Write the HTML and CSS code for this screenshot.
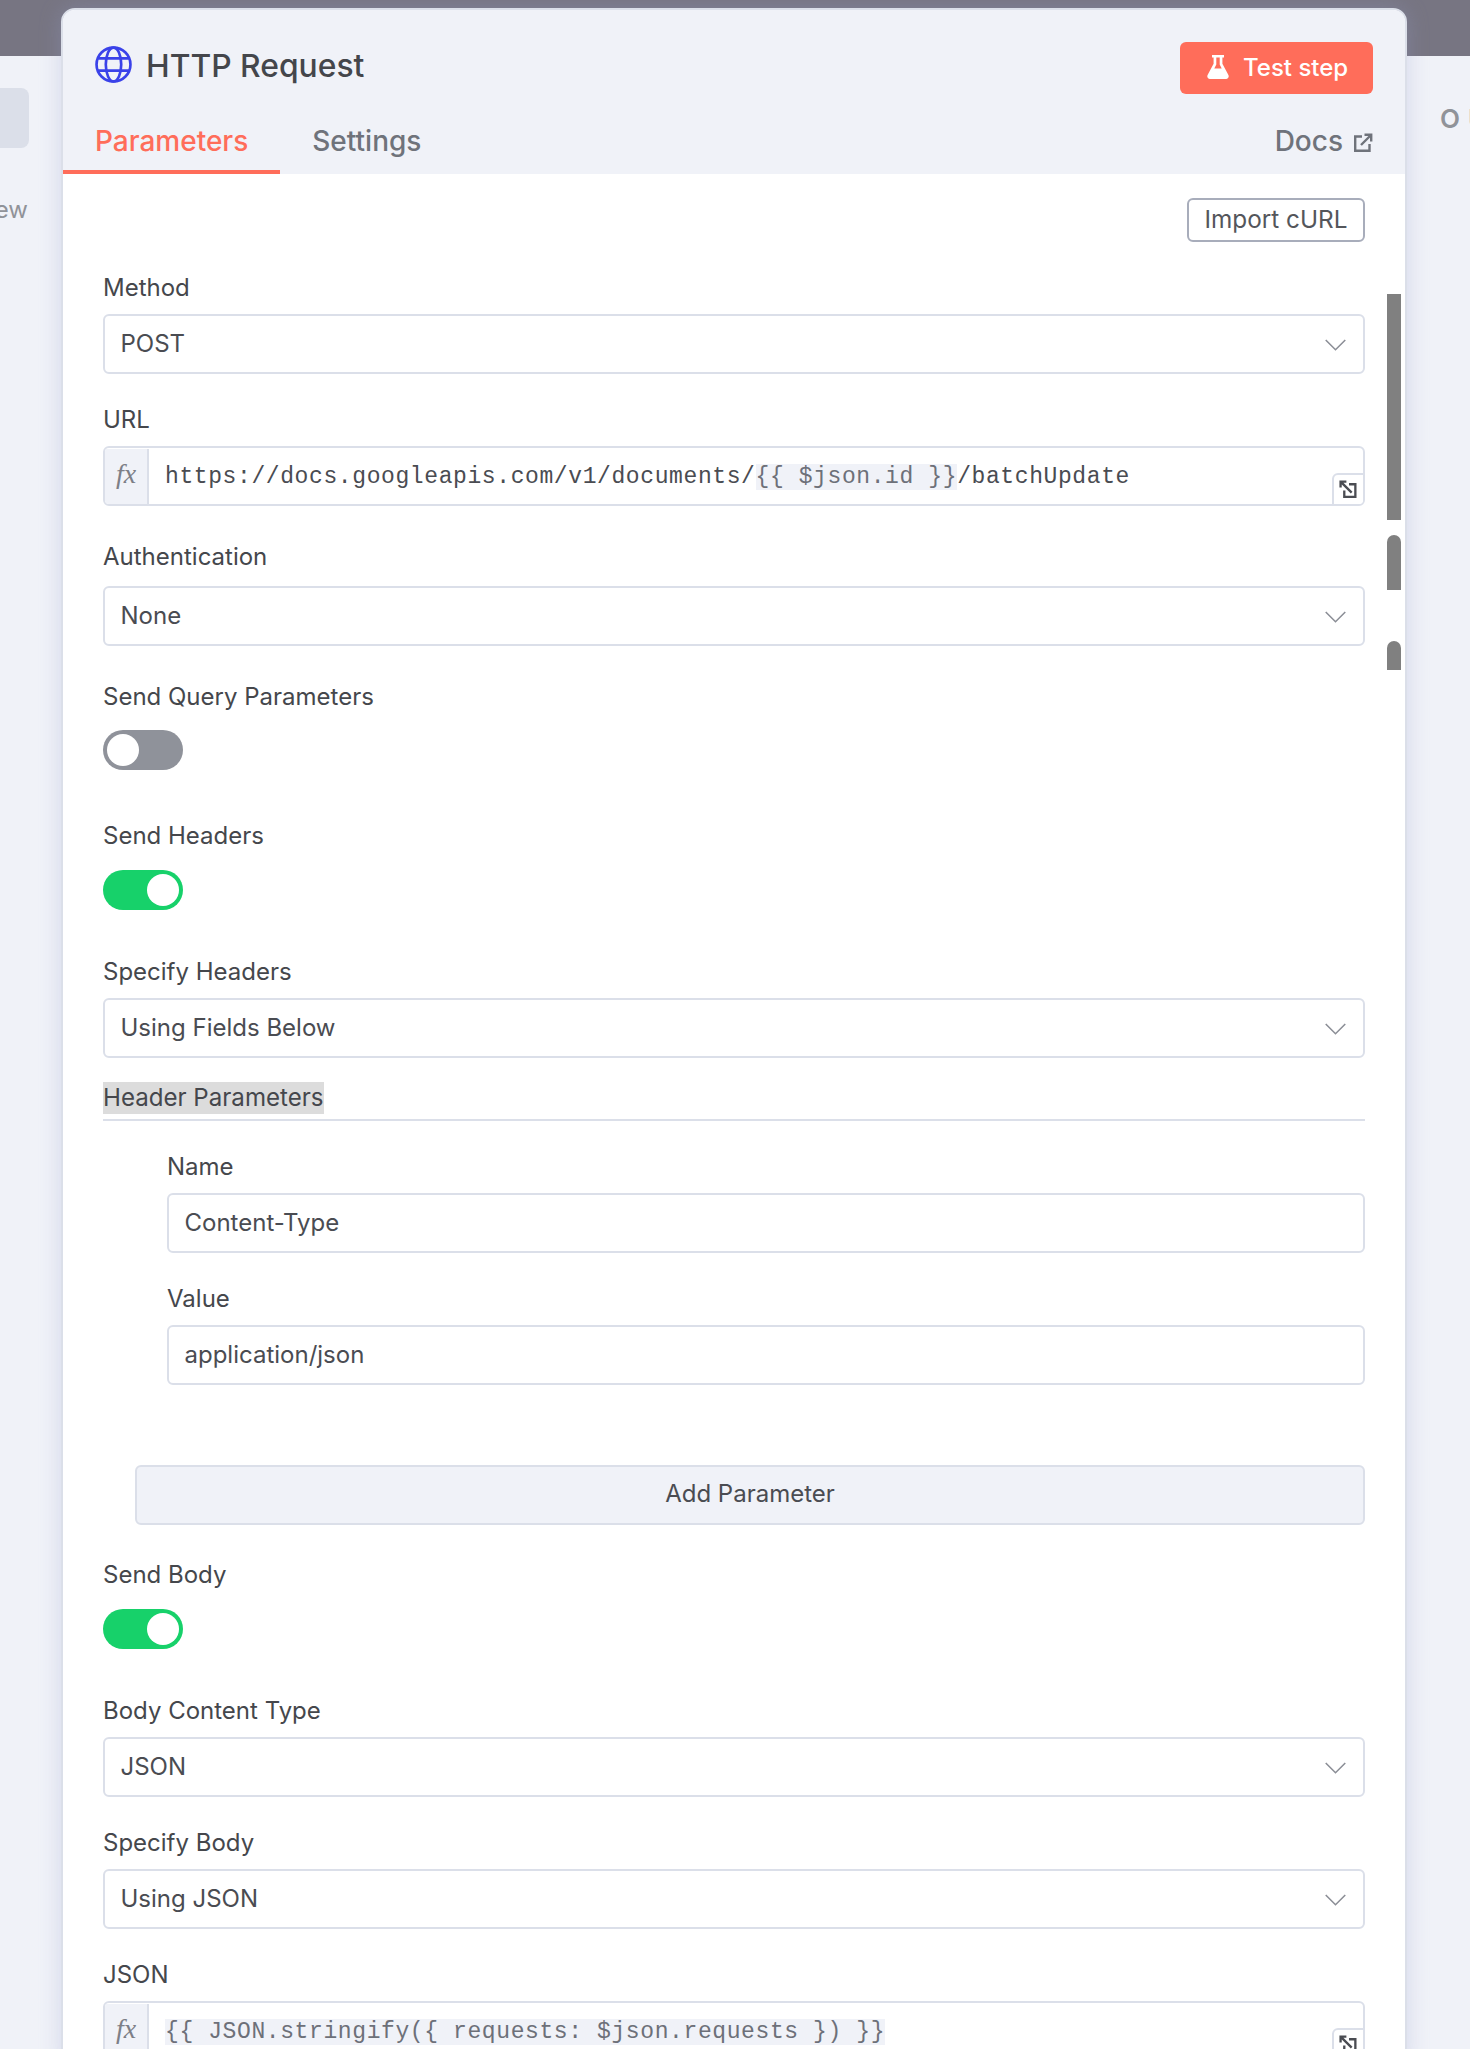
FILE: index.html
```html
<!DOCTYPE html>
<html lang="en">
<head>
<meta charset="utf-8">
<title>HTTP Request</title>
<link rel="stylesheet" href="styles.css">
</head>
<body>
<div class="page">
  <aside class="side side-left">
    <div class="side-pill"></div>
    <div class="side-text"><span>ew</span></div>
  </aside>
  <main class="card">
    <header class="card-head">
      <div class="title-row">
        <div class="title">
          <svg class="globe" viewBox="0 0 36 36" fill="none" stroke="#3a42e9" stroke-width="2.6"><circle cx="18" cy="18" r="16.5"/><ellipse cx="18" cy="18" rx="7.5" ry="16.5"/><path d="M3 12h30M3 24h30"/></svg>
          <span class="title-text">HTTP Request</span>
        </div>
        <button class="test-btn">
          <svg class="flask" viewBox="0 0 22 24" fill="#fff"><path d="M5 0h12v2.6h-1.6v6.2l6 11.2c.9 1.8-.2 4-2.3 4H2.900c-2.100 0-3.200-2.200-2.300-4l6-11.200V2.600H5zM9.300 2.600v6.900L7.300 13.400h7.400l-2-3.900V2.600z"/></svg>
          <span>Test step</span>
        </button>
      </div>
      <nav class="tabs">
        <a class="tab tab-active">Parameters</a>
        <a class="tab">Settings</a>
        <a class="docs">Docs
          <svg class="ext" viewBox="0 0 20 20" fill="none" stroke="#6f737b" stroke-width="2.400"><path d="M9 3.500H2.200v14.300h14.300V11M8 12L18 2M11.500 1.800h6.700v6.700"/></svg>
        </a>
      </nav>
    </header>
    <section class="card-body">
      <div class="scrollbar">
        <div class="thumb thumb-1"></div>
        <div class="thumb thumb-2"></div>
        <div class="thumb thumb-3"></div>
      </div>
      <div class="actions"><button class="import-btn">Import cURL</button></div>

      <div class="field f-method">
        <label>Method</label>
        <div class="control select"><span>POST</span><svg class="chev" viewBox="0 0 20 11" fill="none"><path d="M.7.7L10 10 19.300.7"/></svg></div>
      </div>
      <div class="field f-url">
        <label>URL</label>
        <div class="control expr">
          <i class="fx">fx</i>
          <code class="code">https://docs.googleapis.com/v1/documents/<mark>{{ $json.id }}</mark>/batchUpdate</code>
          <span class="expand"><svg viewBox="0 0 18 18" fill="none" stroke="#4a4c52" stroke-width="2.200"><path d="M2 2l10 10M1.500 7V1.500H7M9.500 4H15.500V16H5V10"/></svg></span>
        </div>
      </div>
      <div class="field f-auth">
        <label>Authentication</label>
        <div class="control select"><span>None</span><svg class="chev" viewBox="0 0 20 11" fill="none"><path d="M.7.7L10 10 19.300.7"/></svg></div>
      </div>
      <div class="field f-query">
        <label>Send Query Parameters</label>
        <div class="switch"></div>
      </div>
      <div class="field f-headers">
        <label>Send Headers</label>
        <div class="switch on"></div>
      </div>
      <div class="field f-spec">
        <label>Specify Headers</label>
        <div class="control select"><span>Using Fields Below</span><svg class="chev" viewBox="0 0 20 11" fill="none"><path d="M.7.7L10 10 19.300.7"/></svg></div>
      </div>

      <div class="collection-title"><span>Header Parameters</span></div>
      <div class="collection-items">
        <div class="field f-name">
          <label>Name</label>
          <div class="control input"><span>Content-Type</span></div>
        </div>
        <div class="field f-value">
          <label>Value</label>
          <div class="control input"><span>application/json</span></div>
        </div>
      </div>
      <button class="add-btn">Add Parameter</button>

      <div class="field f-body">
        <label>Send Body</label>
        <div class="switch on"></div>
      </div>
      <div class="field f-ctype">
        <label>Body Content Type</label>
        <div class="control select"><span>JSON</span><svg class="chev" viewBox="0 0 20 11" fill="none"><path d="M.7.7L10 10 19.300.7"/></svg></div>
      </div>
      <div class="field f-sbody">
        <label>Specify Body</label>
        <div class="control select"><span>Using JSON</span><svg class="chev" viewBox="0 0 20 11" fill="none"><path d="M.7.7L10 10 19.300.7"/></svg></div>
      </div>
      <div class="field f-json">
        <label>JSON</label>
        <div class="control expr">
          <i class="fx">fx</i>
          <code class="code"><mark>{{ JSON.stringify({ requests: $json.requests }) }}</mark></code>
          <span class="expand"><svg viewBox="0 0 18 18" fill="none" stroke="#4a4c52" stroke-width="2.200"><path d="M2 2l10 10M1.500 7V1.500H7M9.500 4H15.500V16H5V10"/></svg></span>
        </div>
      </div>
    </section>
  </main>
  <aside class="side side-right">
    <div class="side-letter">OU</div>
  </aside>
</div>
</body>
</html>
```
FILE: styles.css
```css
* { box-sizing: border-box; }
html, body { margin: 0; padding: 0; }
body {
  width: 1470px;
  height: 2049px;
  overflow: hidden;
  font-family: Inter, "Noto Sans", sans-serif;
  color: #3f4045;
  background: linear-gradient(#777582 56px, #f0f2f8 56px);
}
.page { display: flex; height: 2049px; align-items: flex-start; }

.side { flex: none; overflow: hidden; height: 1993px; margin-top: 56px; }
.side-left { width: 61px; }
.side-right { width: 63px; }
.side-pill {
  width: 29px; height: 60px; margin-top: 32px;
  background: #dbdfe9; border-radius: 0 8px 8px 0;
}
.side-text {
  width: 28px; margin-top: 50px; display: flex; justify-content: flex-end;
  font-size: 24px; line-height: 24px; color: #909399; white-space: nowrap;
}
.side-letter {
  margin: 48px 0 0 33px; font-size: 26px; line-height: 30px; letter-spacing: 8px;
  font-weight: 600; color: #909399; white-space: nowrap;
}

.card {
  flex: none;
  width: 1346px;
  height: 2060px;
  margin-top: 8px;
  background: #fff;
  border: 2px solid #dbdfe9;
  border-radius: 14px 14px 0 0;
  box-shadow: 0 0 22px rgba(150, 160, 205, .32);
  position: relative;
  z-index: 1;
}
.card-head {
  height: 164px;
  background: #f0f2f8;
  border-radius: 12px 12px 0 0;
  display: flex; flex-direction: column;
}
.title-row {
  display: flex; align-items: flex-start; justify-content: space-between;
  padding: 32px 32px 0 32px; height: 122px;
}
.title { display: flex; align-items: center; gap: 14px; height: 44px; font-size: 31.800px; font-weight: 500; color: #44464b; }
.title-text { padding-top: 2px; }
.globe { width: 37px; height: 37px; }
.test-btn {
  width: 193px; height: 52px; border: 0; border-radius: 6px; padding: 0 0 2px 27px;
  background: #ff6d5a; color: #fff;
  font: 500 24px Inter, sans-serif;
  display: flex; align-items: center; gap: 14px;
}
.flask { width: 22px; height: 24px; }
.tabs { display: flex; align-items: stretch; height: 42px; padding-right: 32px; font-size: 28px; color: #6f737b; font-weight: 500; }
.tab { display: block; padding: 0 32px; line-height: 22px; height: 42px; margin-top: -2px; }
.tab-active { color: #ff6d5a; border-bottom: 4px solid #ff6d5a; height: 44px; }
.docs { margin-left: auto; display: flex; align-items: center; gap: 10px; height: 22px; margin-top: -2px; }
.ext { width: 20px; height: 20px; margin-top: 4px; }

.card-body { position: relative; padding: 24px 40px 0 40px; }
.scrollbar { position: absolute; left: 1324px; top: 120px; width: 14px; display: flex; flex-direction: column; }
.thumb { width: 14px; background: #808080; }
.thumb-1 { height: 226px; }
.thumb-2 { height: 55px; margin-top: 15px; border-radius: 7px 7px 0 0; }
.thumb-3 { height: 29px; margin-top: 51px; border-radius: 7px 7px 0 0; }

.actions { display: flex; justify-content: flex-end; }
.import-btn {
  width: 178px; height: 44px; background: #fff;
  border: 2px solid #a8adbb; border-radius: 6px; padding: 0 0 2px;
  font: 400 24.300px Inter, sans-serif; color: #54565b;
}

.field { display: flex; flex-direction: column; }
.field label { display: block; height: 24px; line-height: 26px; font-size: 24px; color: #45474c; margin-bottom: 15px; }
.f-method { margin-top: 33px; }
.f-url { margin-top: 33.500px; }
.f-auth { margin-top: 38px; }
.f-auth label { margin-bottom: 18.500px; }
.f-query { margin-top: 38.500px; }
.f-query label { margin-bottom: 22px; }
.f-headers { margin-top: 53px; }
.f-headers label { margin-bottom: 23px; }
.f-spec { margin-top: 49px; }
.f-name { margin-top: 33px; }
.f-value { margin-top: 33.500px; }
.f-body { margin-top: 37.500px; }
.f-body label { margin-bottom: 23px; }
.f-ctype { margin-top: 49px; }
.f-sbody { margin-top: 33.500px; }
.f-json { margin-top: 33.500px; }

.control {
  position: relative; display: flex; align-items: center;
  height: 59.500px; background: #fff;
  border: 2px solid #dbdfe9; border-radius: 6px; padding-bottom: 1px;
  font-size: 24px; color: #4a4c52;
}
.select, .input { padding-left: 15.500px; }
.chev { position: absolute; right: 17px; top: 23px; width: 21px; height: 12px; stroke: #8b8e96; stroke-width: 1.500; }

.expr { padding: 0; overflow: hidden; }
.fx {
  flex: none; width: 44px; height: 100%; margin-bottom: -1px;
  background: #f0f2f8; border-right: 2px solid #dbdfe9;
  font: italic 28px/50px "Liberation Serif", serif; color: #7d7f87; text-align: center;
}
.code {
  padding: 3px 0 0 16px; white-space: pre;
  font-family: "Liberation Mono", monospace; font-size: 23px; letter-spacing: .600px; color: #4a4c52;
}
.code mark { background: #f0f2f8; color: #6d7079; }
.expand {
  position: absolute; right: -2px; bottom: -2px; width: 33px; height: 33px;
  border: 2px solid #dbdfe9; border-radius: 6px 0 0 0; background: #fff;
  display: flex; align-items: center; justify-content: center;
}
.expand svg { width: 19px; height: 19px; }

.switch { width: 80px; height: 40px; border-radius: 20px; background: #8f929a; position: relative; }
.switch::after {
  content: ""; position: absolute; top: 4px; left: 4px;
  width: 32px; height: 32px; border-radius: 50%; background: #fff;
}
.switch.on { background: #17d16a; }
.switch.on::after { left: 44px; }

.collection-title { margin-top: 24.500px; height: 39px; border-bottom: 2px solid #dbdfe9; }
.collection-title span { display: inline-block; height: 32px; line-height: 32px; font-size: 24.100px; background: #dcdcdc; color: #45474c; vertical-align: top; }
.collection-items { padding-left: 64px; }
.add-btn {
  display: block; margin: 80.500px 0 0 32px; width: 1230px; height: 59.500px;
  background: #f0f2f8; border: 2px solid #dbdfe9; border-radius: 6px; padding: 0 0 2px;
  font: 400 24px Inter, sans-serif; color: #4a4c52;
}
```
